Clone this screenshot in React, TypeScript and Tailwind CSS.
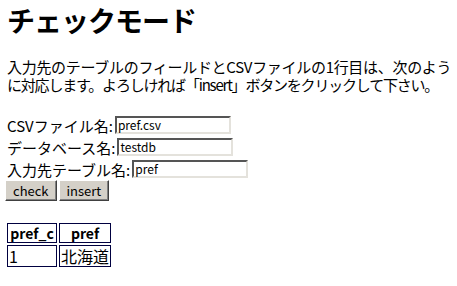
import React from "react";

const jp = {
  fontFamily: '"Noto Sans CJK JP", "Noto Sans", sans-serif',
};

function Field(props: { label: string; value: string }) {
  const { label, value } = props;
  return (
    <div className="flex h-[22px] items-center">
      <span className="text-[15px] leading-none">{label}</span>
      <span className="ml-[2px] flex h-[18px] w-[116px] items-center border-2 border-t-[#555] border-l-[#555] border-r-[#e4e2dc] border-b-[#e4e2dc] bg-white px-[1px] text-[12px] leading-none">
        {value}
      </span>
    </div>
  );
}

function ClassicButton(props: { children: React.ReactNode }) {
  return (
    <button className="h-[21px] border border-t-white border-l-white border-r-[#404040] border-b-[#404040] bg-[#d4d0c8] px-[7px] text-[13px] leading-none text-black shadow-[inset_-1px_-1px_0_#808080]">
      {props.children}
    </button>
  );
}

export default function App() {
  return (
    <div
      className="min-h-[286px] bg-white px-[7px] pt-[3px] text-black"
      style={jp}
    >
      <h1 className="text-[28px] font-bold leading-[34px] tracking-[-1px]">
        チェックモード
      </h1>
      <p className="mt-[21px] flex flex-col whitespace-nowrap text-[15px] leading-[18px]">
        <span className="tracking-[-0.3px]">
          入力先のテーブルのフィールドとCSVファイルの1行目は、次のよう
        </span>
        <span className="tracking-[-1.2px]">
          に対応します。よろしければ「insert」ボタンをクリックして下さい。
        </span>
      </p>

      <div className="mt-[20px] flex flex-col">
        <Field label="CSVファイル名:" value="pref.csv" />
        <Field label="データベース名:" value="testdb" />
        <Field label="入力先テーブル名:" value="pref" />
        <div className="-ml-[2px] flex gap-[2px]">
          <ClassicButton>check</ClassicButton>
          <ClassicButton>insert</ClassicButton>
        </div>
      </div>

      <table className="-ml-[2px] mt-[20px] border-separate border-spacing-[2px]">
        <thead>
          <tr>
            <th className="h-[20px] w-[50px] border border-[#000040] px-[2px] text-center text-[14px] font-bold leading-none">
              pref_c
            </th>
            <th className="h-[20px] w-[52px] border border-[#000040] px-[2px] text-center text-[14px] font-bold leading-none">
              pref
            </th>
          </tr>
        </thead>
        <tbody>
          <tr>
            <td className="h-[22px] border border-[#000040] px-[1px] text-left text-[16px] leading-none">
              1
            </td>
            <td className="h-[22px] border border-[#000040] px-[1px] text-left text-[16px] leading-none">
              北海道
            </td>
          </tr>
        </tbody>
      </table>
    </div>
  );
}
